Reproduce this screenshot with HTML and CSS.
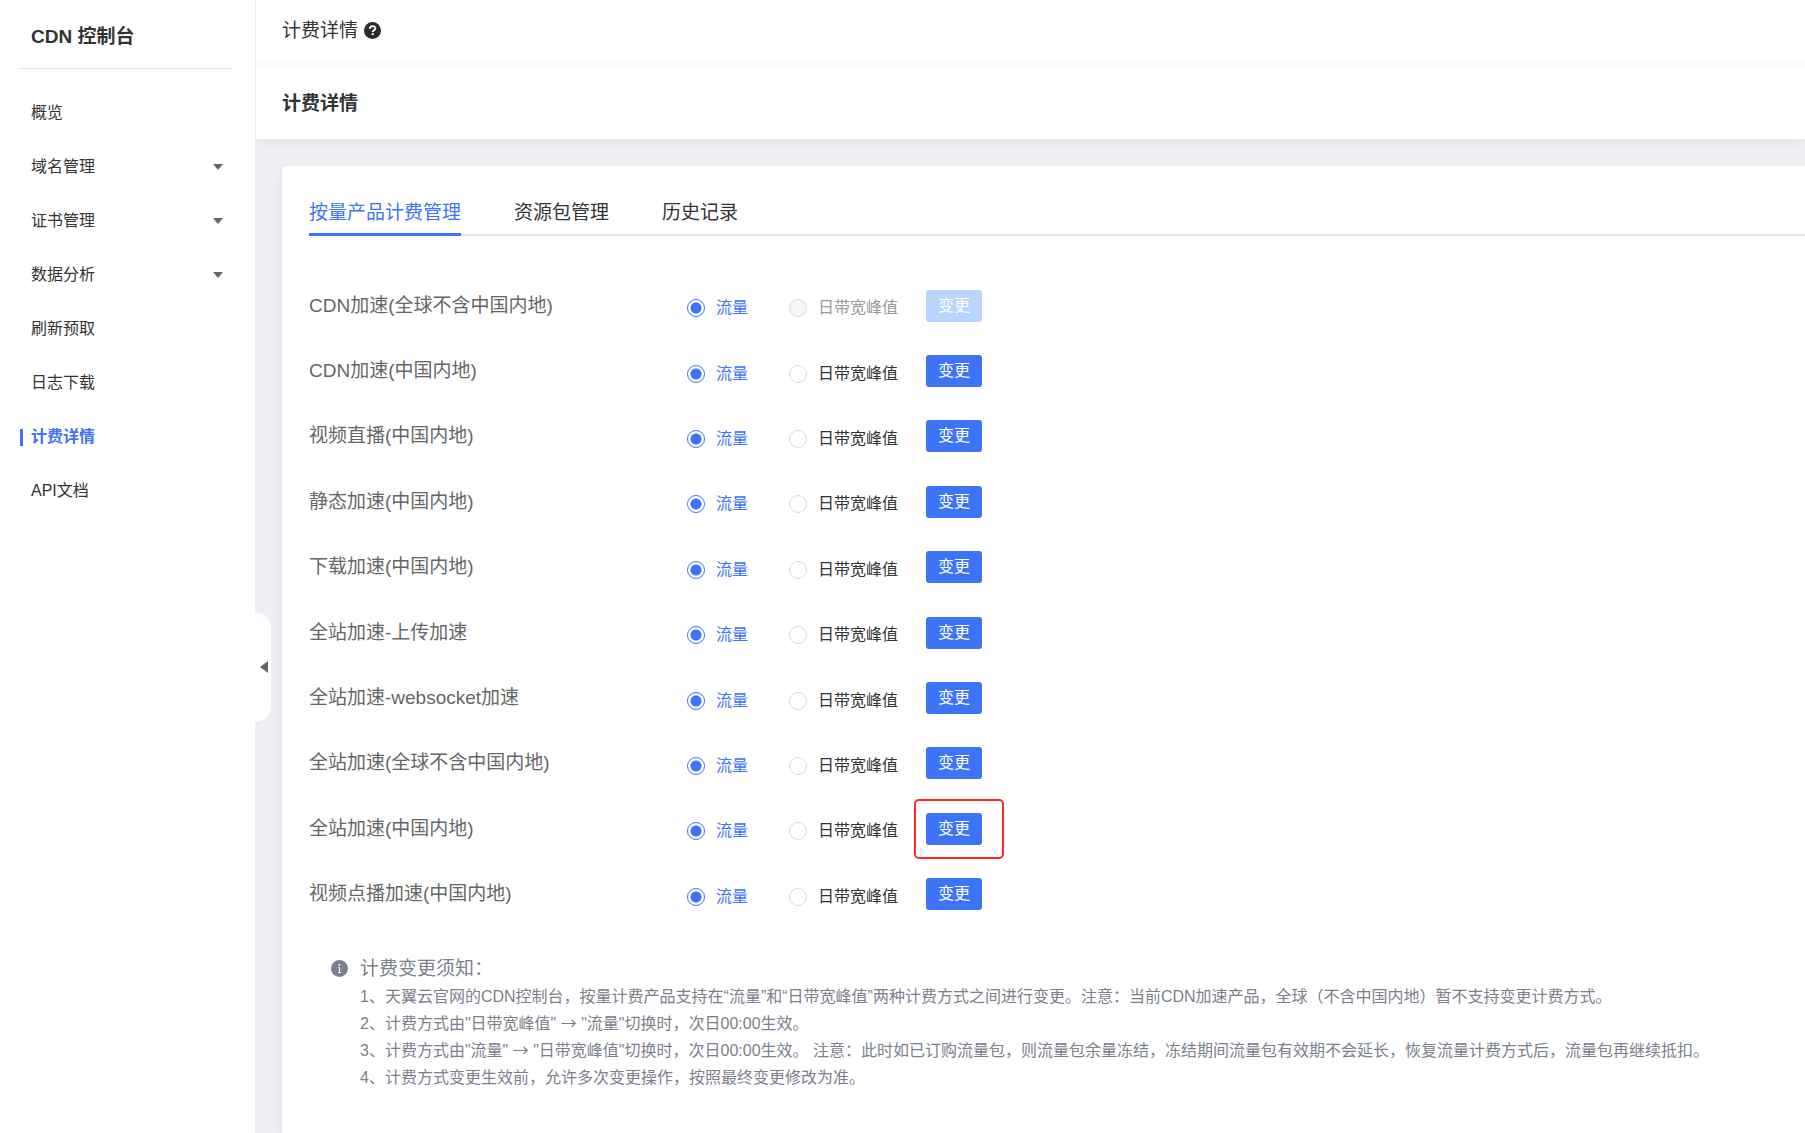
FILE: index.html
```html
<!DOCTYPE html>
<html lang="zh-CN">
<head>
<meta charset="utf-8">
<meta name="viewport" content="width=device-width, initial-scale=1">
<title>计费详情 - CDN 控制台</title>
<link rel="stylesheet" href="styles.css">
</head>
<body>
<div class="layout">
  <aside class="sidebar">
    <h2 class="brand">CDN 控制台</h2>
    <nav class="menu">
      <a class="menu-item" href="#">概览</a>
      <a class="menu-item has-sub" href="#">域名管理</a>
      <a class="menu-item has-sub" href="#">证书管理</a>
      <a class="menu-item has-sub" href="#">数据分析</a>
      <a class="menu-item" href="#">刷新预取</a>
      <a class="menu-item" href="#">日志下载</a>
      <a class="menu-item active" href="#">计费详情</a>
      <a class="menu-item" href="#">API文档</a>
    </nav>
    <button class="collapse" type="button" aria-label="收起菜单"></button>
  </aside>
  <main class="main">
    <header class="topbar">
      <span>计费详情</span>
      <svg class="help" viewBox="0 0 17 17" aria-hidden="true"><circle cx="8.500" cy="8.500" r="8.500" fill="#2b2b2b"/><path d="M5.900 6.700C5.900 5 7 4.100 8.600 4.100S11.300 5.100 11.300 6.500C11.300 8.300 8.700 8.200 8.700 10" fill="none" stroke="#fff" stroke-width="1.900"/><rect x="7.700" y="11.100" width="2" height="2" fill="#fff"/></svg>
    </header>
    <h1 class="page-title">计费详情</h1>
    <section class="card">
      <nav class="tabs">
        <a class="tab current" href="#">按量产品计费管理</a>
        <a class="tab" href="#">资源包管理</a>
        <a class="tab" href="#">历史记录</a>
      </nav>
      <form class="products">
        <div class="row">
          <span class="name">CDN加速(全球不含中国内地)</span>
          <label class="opt"><input type="radio" name="p1" checked><span>流量</span></label>
          <label class="opt"><input type="radio" name="p1" disabled><span>日带宽峰值</span></label>
          <button class="btn" type="button" disabled>变更</button>
        </div>
        <div class="row">
          <span class="name">CDN加速(中国内地)</span>
          <label class="opt"><input type="radio" name="p2" checked><span>流量</span></label>
          <label class="opt"><input type="radio" name="p2"><span>日带宽峰值</span></label>
          <button class="btn" type="button">变更</button>
        </div>
        <div class="row">
          <span class="name">视频直播(中国内地)</span>
          <label class="opt"><input type="radio" name="p3" checked><span>流量</span></label>
          <label class="opt"><input type="radio" name="p3"><span>日带宽峰值</span></label>
          <button class="btn" type="button">变更</button>
        </div>
        <div class="row">
          <span class="name">静态加速(中国内地)</span>
          <label class="opt"><input type="radio" name="p4" checked><span>流量</span></label>
          <label class="opt"><input type="radio" name="p4"><span>日带宽峰值</span></label>
          <button class="btn" type="button">变更</button>
        </div>
        <div class="row">
          <span class="name">下载加速(中国内地)</span>
          <label class="opt"><input type="radio" name="p5" checked><span>流量</span></label>
          <label class="opt"><input type="radio" name="p5"><span>日带宽峰值</span></label>
          <button class="btn" type="button">变更</button>
        </div>
        <div class="row">
          <span class="name">全站加速-上传加速</span>
          <label class="opt"><input type="radio" name="p6" checked><span>流量</span></label>
          <label class="opt"><input type="radio" name="p6"><span>日带宽峰值</span></label>
          <button class="btn" type="button">变更</button>
        </div>
        <div class="row">
          <span class="name">全站加速-websocket加速</span>
          <label class="opt"><input type="radio" name="p7" checked><span>流量</span></label>
          <label class="opt"><input type="radio" name="p7"><span>日带宽峰值</span></label>
          <button class="btn" type="button">变更</button>
        </div>
        <div class="row">
          <span class="name">全站加速(全球不含中国内地)</span>
          <label class="opt"><input type="radio" name="p8" checked><span>流量</span></label>
          <label class="opt"><input type="radio" name="p8"><span>日带宽峰值</span></label>
          <button class="btn" type="button">变更</button>
        </div>
        <div class="row">
          <span class="name">全站加速(中国内地)</span>
          <label class="opt"><input type="radio" name="p9" checked><span>流量</span></label>
          <label class="opt"><input type="radio" name="p9"><span>日带宽峰值</span></label>
          <span class="marked"><button class="btn" type="button">变更</button></span>
        </div>
        <div class="row">
          <span class="name">视频点播加速(中国内地)</span>
          <label class="opt"><input type="radio" name="p10" checked><span>流量</span></label>
          <label class="opt"><input type="radio" name="p10"><span>日带宽峰值</span></label>
          <button class="btn" type="button">变更</button>
        </div>
      </form>
      <div class="notice">
        <svg class="info" viewBox="0 0 17 17" aria-hidden="true"><circle cx="8.500" cy="8.500" r="8.500" fill="#7c808c"/><rect x="7.700" y="4" width="1.600" height="1.600" fill="#fff"/><path d="M7.200 7.400h1.300v4.900M7 12.500h3" fill="none" stroke="#fff" stroke-width="1"/></svg>
        <div class="notice-body">
          <h3 class="notice-title">计费变更须知：</h3>
          <p>1、天翼云官网的CDN控制台，按量计费产品支持在“流量”和“日带宽峰值”两种计费方式之间进行变更。注意：当前CDN加速产品，全球（不含中国内地）暂不支持变更计费方式。</p>
          <p>2、计费方式由"日带宽峰值" <span class="arrow">→</span> "流量"切换时，次日00:00生效。</p>
          <p>3、计费方式由"流量" <span class="arrow">→</span> "日带宽峰值"切换时，次日00:00生效。 注意：此时如已订购流量包，则流量包余量冻结，冻结期间流量包有效期不会延长，恢复流量计费方式后，流量包再继续抵扣。</p>
          <p>4、计费方式变更生效前，允许多次变更操作，按照最终变更修改为准。</p>
        </div>
      </div>
    </section>
  </main>
</div>
</body>
</html>
```

FILE: styles.css
```css
* { box-sizing: border-box; }

body {
  margin: 0;
  background: #fff;
  color: #333;
  font: 16px/24px "Liberation Sans", "Noto Sans CJK SC", sans-serif;
}

h1, h2, h3, p { margin: 0; }
a { color: inherit; text-decoration: none; }

.layout { display: flex; min-height: 100vh; }

/* Sidebar */
.sidebar {
  position: relative;
  flex: 0 0 255px;
  padding: 0 22px 0 20px;
  background: #fff;
}
.brand {
  padding: 23px 11px 17px;
  border-bottom: 1px solid #dfe1ec;
  font-size: 19px;
  line-height: 28px;
}
.menu { padding-top: 17px; }
.menu-item {
  display: flex;
  align-items: center;
  justify-content: space-between;
  height: 54px;
  padding: 0 10px 0 11px;
}
.has-sub::after {
  content: "";
  border: 5px solid transparent;
  border-top: 6px solid #666;
  border-bottom: 0;
}
.menu-item.active {
  padding-left: 0;
  justify-content: flex-start;
  gap: 8px;
  color: #3d73f5;
  font-weight: 700;
}
.active::before {
  content: "";
  width: 3px;
  height: 17px;
  background: #3d73f5;
}
.collapse {
  position: absolute;
  z-index: 1;
  top: 613px;
  left: 100%;
  display: grid;
  place-items: center end;
  width: 16px;
  height: 108px;
  padding: 0 3px 0 0;
  border: 0;
  border-radius: 0 14px 14px 0;
  background: #fff;
}
.collapse::before {
  content: "";
  border: 6px solid transparent;
  border-right: 8px solid #666;
  border-left: 0;
}

/* Content */
.main {
  flex: 1;
  min-width: 0;
  display: flex;
  flex-direction: column;
  border-left: 1px solid #eeeff4;
  background: #eeeff4;
}
.topbar {
  display: flex;
  align-items: center;
  gap: 6px;
  height: 67px;
  padding: 0 26px 6px;
  background: linear-gradient(#fff 60px, #f8f8fa);
  font-size: 19px;
}
.help { width: 17px; height: 17px; }
.page-title {
  padding: 23px 26px 21px;
  background: #fff;
  box-shadow: 0 2px 12px rgba(0, 0, 0, .05);
  clip-path: inset(0 0 -16px 0);
  font-size: 19px;
  line-height: 28px;
}
.card {
  flex: 1;
  margin: 27px 0 0 26px;
  padding: 27px 0 40px 27px;
  border-radius: 5px 0 0 0;
  background: #fff;
  box-shadow: 0 6px 14px rgba(0, 0, 0, .06);
}
.tabs {
  display: flex;
  gap: 53px;
  height: 43px;
  box-shadow: inset 0 -2px #dfe3f0;
  font-size: 19px;
}
.tab { padding-top: 8px; }
.tab.current {
  border-bottom: 3px solid #3d73f5;
  color: #3d73f5;
}

/* Product rows share the block's height evenly */
.products {
  display: grid;
  grid-auto-rows: 1fr;
  min-height: 654px;
  margin-top: 37px;
}
.row {
  display: grid;
  grid-template-columns: 378px 102px 137px auto;
  align-items: center;
  justify-content: start;
}
.name { color: #666; font-size: 19px; }
.opt {
  display: flex;
  align-items: center;
  gap: 11px;
  padding-top: 5px;
}
.opt input {
  appearance: none;
  width: 18px;
  height: 18px;
  margin: 0;
  border: 1px solid #d9dbe0;
  border-radius: 50%;
  background: #fff;
}
.opt input:checked {
  border-color: #3d73f5;
  background: radial-gradient(circle, #3d73f5 5px, #fff 6px);
}
.opt input:checked + span { color: #3d73f5; }
.opt input:disabled { background: #f5f7fa; }
.opt input:disabled + span { color: #999; }
.btn {
  width: 56px;
  height: 32px;
  padding: 0;
  border: 0;
  border-radius: 3px;
  background: #3d73f5;
  color: #fff;
  font: inherit;
}
.btn:disabled { background: #b9d4ff; }
.marked {
  margin-left: -12px;
  padding: 12px 20px 12px 10px;
  border: 2px solid #fa2a20;
  border-radius: 5px;
  line-height: 0;
}
.marked .btn { line-height: 24px; }

.notice {
  display: flex;
  gap: 12px;
  margin-top: 28px;
  padding: 0 40px 0 22px;
  color: #7c808c;
  line-height: 27px;
}
.info { flex: none; width: 17px; height: 17px; margin-top: 5px; }
.notice-title { font-size: 19px; font-weight: 400; line-height: 28px; }
.arrow { font-family: "Noto Sans CJK SC", sans-serif; line-height: 1; }
```
